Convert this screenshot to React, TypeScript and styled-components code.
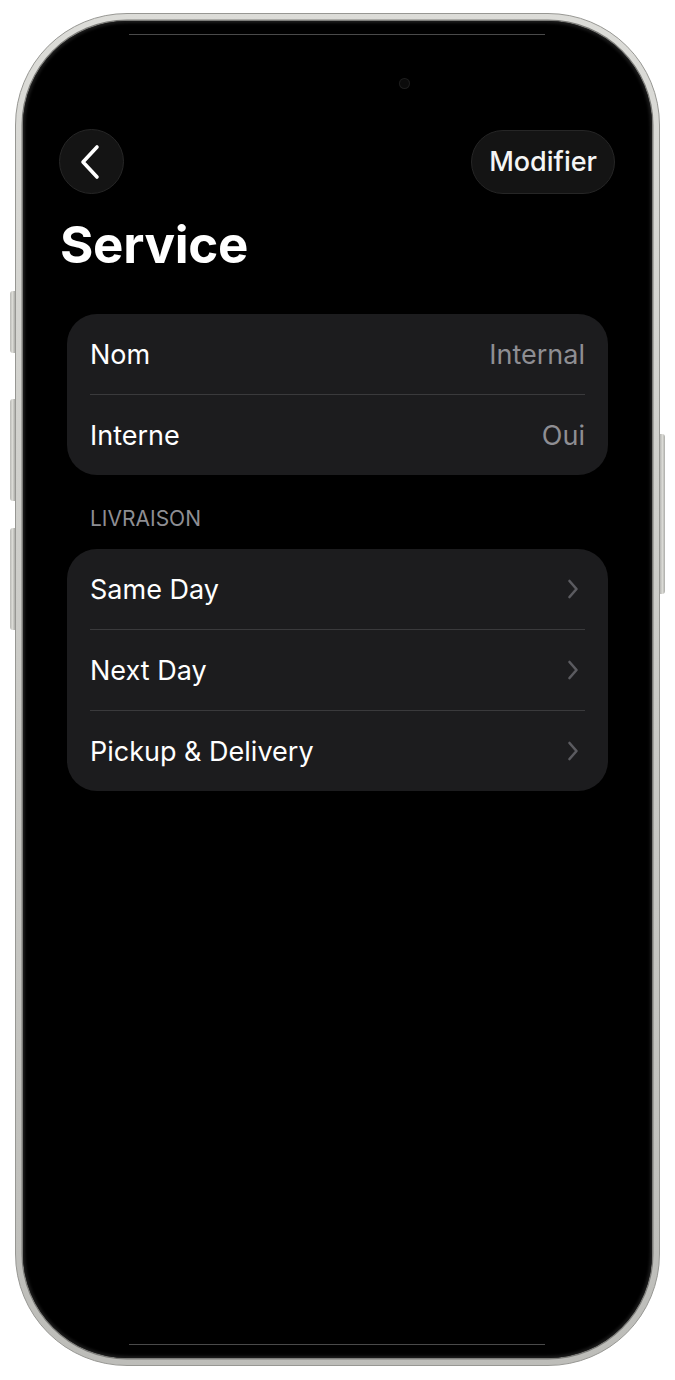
import styled, { createGlobalStyle } from "styled-components"

const GlobalStyle = createGlobalStyle`
    *{
        box-sizing: border-box;
    }

    body{
        margin: 0;
        background: #ffffff;
        font-family: Inter, "Noto Sans", "Liberation Sans", sans-serif;
        -webkit-font-smoothing: antialiased;
    }
`;

const infoRows = [
    { label: "Nom", value: "Internal" },
    { label: "Interne", value: "Oui" },
];

const deliveryRows = ["Same Day", "Next Day", "Pickup & Delivery"];

const BackIcon = () => (
    <svg width="22" height="36" viewBox="0 0 22 36" fill="none">
        <path d="M18 3L4 18L18 33" stroke="#ffffff" strokeWidth="3.6" strokeLinecap="round" strokeLinejoin="round" />
    </svg>
);

const ChevronIcon = () => (
    <Chevron width="14" height="24" viewBox="0 0 14 24" fill="none">
        <path d="M3.5 4L10.5 12L3.5 20" stroke="#5b5b60" strokeWidth="2.6" strokeLinecap="round" strokeLinejoin="round" />
    </Chevron>
);

export default function App() {
    return (
        <>
            <GlobalStyle />
            <Page>
                <Frame>
                    <SideButton $side="left" $top={277} $height={62} />
                    <SideButton $side="left" $top={385} $height={102} />
                    <SideButton $side="left" $top={514} $height={102} />
                    <SideButton $side="right" $top={420} $height={160} />
                    <Screen>
                        <EdgeLine $pos="top" />
                        <EdgeLine $pos="bottom" />
                        <Camera />

                        <NavBar>
                            <RoundButton aria-label="Retour"><BackIcon /></RoundButton>
                            <PillButton>Modifier</PillButton>
                        </NavBar>

                        <Title>Service</Title>

                        <Group>
                            {infoRows.map((row, i) => (
                                <Row key={row.label} $first={i === 0}>
                                    <Label>{row.label}</Label>
                                    <Value>{row.value}</Value>
                                </Row>
                            ))}
                        </Group>

                        <SectionHeader>LIVRAISON</SectionHeader>

                        <Group>
                            {deliveryRows.map((row, i) => (
                                <Row key={row} $first={i === 0}>
                                    <Label>{row}</Label>
                                    <ChevronIcon />
                                </Row>
                            ))}
                        </Group>
                    </Screen>
                </Frame>
            </Page>
        </>
    );
}

const Page = styled.div`
    width: 675px;
    height: 1380px;
    padding: 13px 0 0 15px;
    overflow: hidden;
`;

const Frame = styled.div`
    position: relative;
    width: 645px;
    height: 1353px;
    border-radius: 112px;
    padding: 7px;
    background: linear-gradient(180deg, #dcdcd8 0%, #cacac6 50%, #bdbdb9 100%);
    border: 1px solid #979793;
`;

const SideButton = styled.div<{ $side: "left" | "right"; $top: number; $height: number }>`
    position: absolute;
    top: ${p => p.$top}px;
    ${p => (p.$side === "left" ? "left: -6px;" : "right: -6px;")}
    width: 5px;
    height: ${p => p.$height}px;
    border-radius: ${p => (p.$side === "left" ? "3px 0 0 3px" : "0 3px 3px 0")};
    background: linear-gradient(90deg, #b8b8b4, #dadad5, #acaca8);
`;

const Screen = styled.div`
    position: relative;
    height: 100%;
    border-radius: 104px;
    background: #000000;
    box-shadow: 0 0 0 1.5px #7c7c79, inset 0 0 3px 2px #1c1c1c;
    display: flex;
    flex-direction: column;
    padding-top: 108px;
    overflow: hidden;
`;

const EdgeLine = styled.div<{ $pos: "top" | "bottom" }>`
    position: absolute;
    left: 106px;
    right: 107px;
    height: 1px;
    background: #4a4a4a;
    ${p => (p.$pos === "top" ? "top: 13px;" : "bottom: 13px;")}
`;

const Camera = styled.div`
    position: absolute;
    top: 58px;
    left: 377px;
    width: 9px;
    height: 9px;
    border-radius: 50%;
    background: #0b0b0b;
    box-shadow: 0 0 0 1px #1e1e1e;
`;

const NavBar = styled.div`
    display: flex;
    align-items: center;
    justify-content: space-between;
    padding: 0 37px 0 36px;
`;

const RoundButton = styled.button`
    width: 65px;
    height: 65px;
    border-radius: 50%;
    border: 1px solid #262626;
    background: #141414;
    display: flex;
    align-items: center;
    justify-content: center;
    padding: 0 3px 0 0;
    cursor: pointer;
`;

const PillButton = styled.button`
    height: 64px;
    padding: 0 17px;
    border-radius: 32px;
    border: 1px solid #262626;
    background: #141414;
    color: #f5f5f5;
    font-family: inherit;
    font-size: 27px;
    font-weight: 500;
    cursor: pointer;
`;

const Title = styled.h1`
    margin: 19px 0 37px;
    padding-left: 37px;
    font-size: 51px;
    line-height: 64px;
    font-weight: 700;
    letter-spacing: -0.3px;
    color: #ffffff;
`;

const Group = styled.div`
    margin: 0 44px;
    border-radius: 30px;
    background: #1c1c1e;
    padding: 0 23px 0 23px;
`;

const Row = styled.div<{ $first: boolean }>`
    height: ${p => (p.$first ? 80 : 81)}px;
    display: flex;
    align-items: center;
    justify-content: space-between;
    border-top: ${p => (p.$first ? "none" : "1px solid #3a3a3c")};
`;

const Chevron = styled.svg`
    margin-right: 5px;
`;

const Label = styled.span`
    font-size: 27px;
    color: #ffffff;
`;

const Value = styled.span`
    font-size: 27px;
    color: #8e8e93;
`;

const SectionHeader = styled.div`
    margin: 31px 0 18px;
    padding-left: 67px;
    font-size: 21px;
    line-height: 25px;
    color: #8e8e93;
`;
